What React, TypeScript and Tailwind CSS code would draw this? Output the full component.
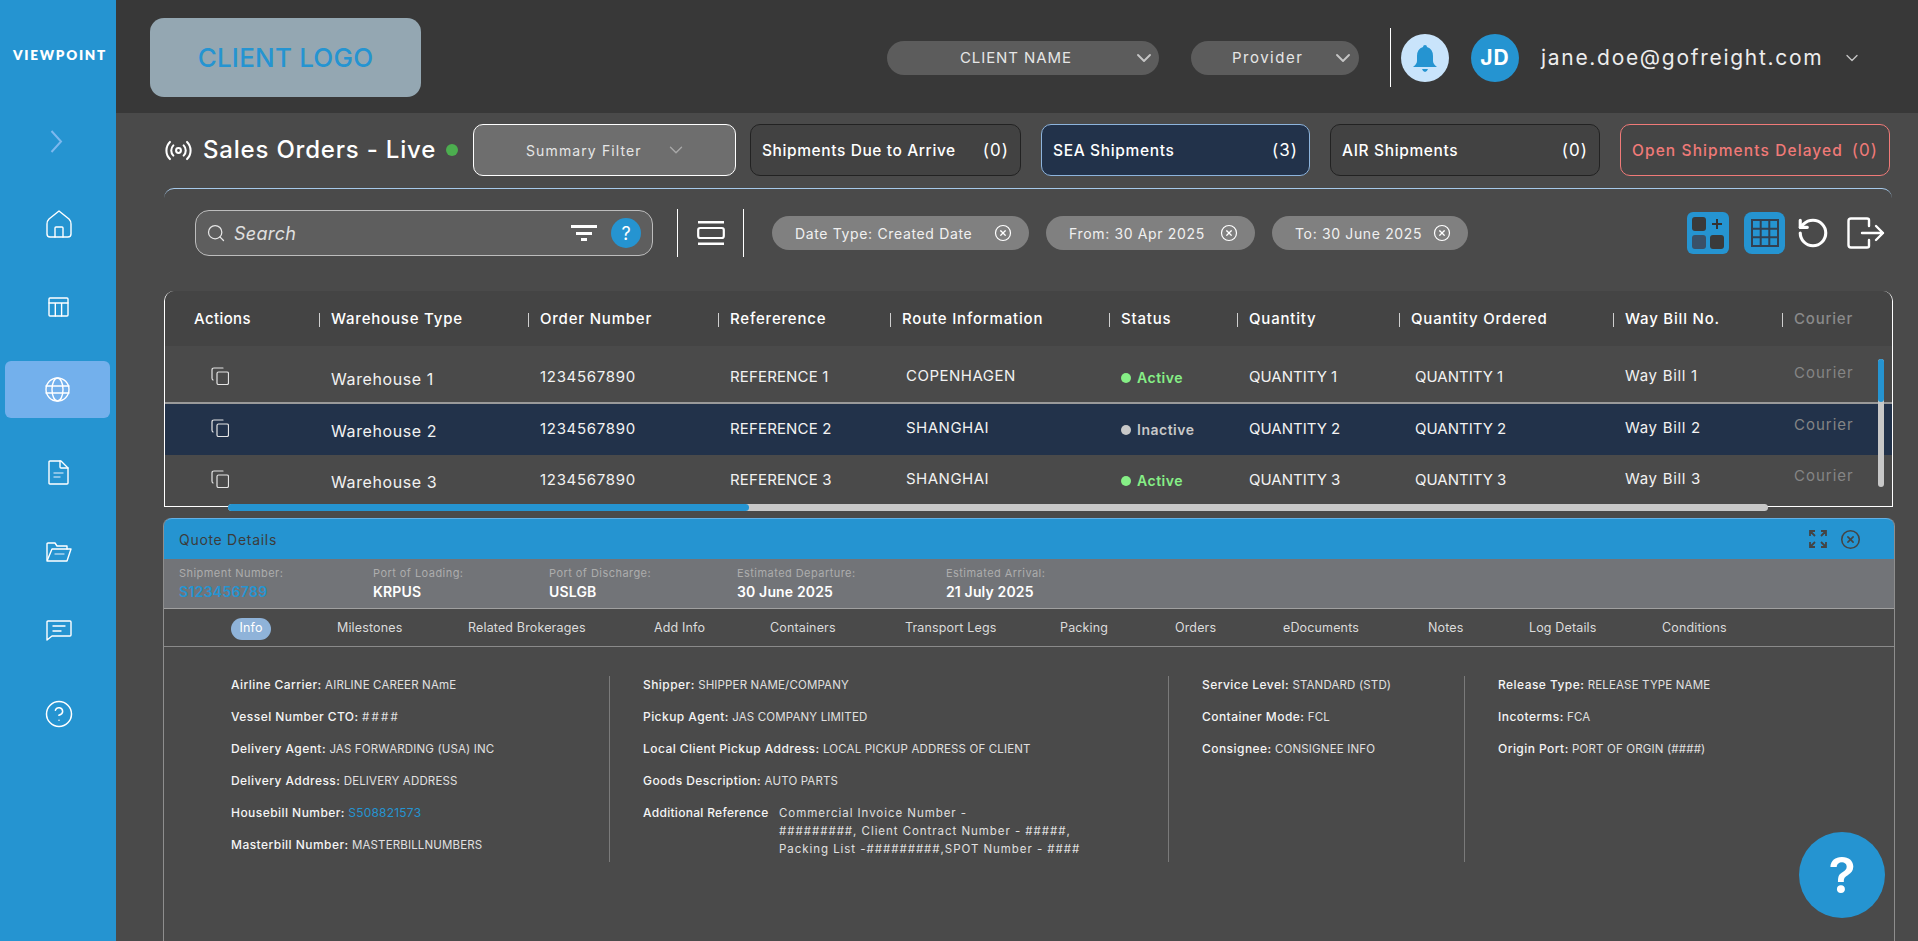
import React from "react";
import { ChevronDown, Search, RotateCcw, Radio, CircleX, HelpCircle } from "lucide-react";

const stroke = { fill: "none", stroke: "currentColor", strokeLinecap: "round" as const, strokeLinejoin: "round" as const };

function HomeIcon() {
  return (
    <svg width="26" height="28" viewBox="0 0 26 28" className="text-white" {...stroke} strokeWidth="1.4">
      <path d="M13 1 L23 9 Q25 11 25 14 V24 Q25 27 22 27 H4 Q1 27 1 24 V14 Q1 11 3 9 Z" />
      <path d="M9 27 V18 Q9 17 10 17 H16 Q17 17 17 18 V27" />
    </svg>
  );
}
function TableIcon() {
  return (
    <svg width="21" height="20" viewBox="0 0 21 20" className="text-white" {...stroke} strokeWidth="1.4">
      <rect x="1" y="1" width="19" height="18" rx="1" />
      <path d="M1 6 H20 M7.3 6 V19 M13.6 6 V19" />
    </svg>
  );
}
function GlobeIcon() {
  return (
    <svg width="25" height="25" viewBox="0 0 25 25" className="text-white" {...stroke} strokeWidth="1.4">
      <circle cx="12.5" cy="12.5" r="11.5" />
      <ellipse cx="12.5" cy="12.5" rx="5.5" ry="11.5" />
      <path d="M1 9 H24 M1 16 H24" />
    </svg>
  );
}
function DocIcon() {
  return (
    <svg width="21" height="25" viewBox="0 0 21 25" className="text-white" {...stroke} strokeWidth="1.4">
      <path d="M2 1 H13 L20 8 V23 Q20 24 19 24 H2 Q1 24 1 23 V2 Q1 1 2 1 Z" />
      <path d="M12 1 V7 Q12 8 13 8 H20" />
      <path d="M6 13 H15 M6 17 H12" stroke="#a9d2ee" />
    </svg>
  );
}
function FolderIcon() {
  return (
    <svg width="26" height="20" viewBox="0 0 26 20" className="text-white" {...stroke} strokeWidth="1.4">
      <path d="M1 18 V2 Q1 1 2 1 H9 L11 4 H21 V7" />
      <path d="M6 7 H25 L21 19 H1 Z" />
      <path d="M9 12 H18" stroke="#a9d2ee" />
    </svg>
  );
}
function ChatIcon() {
  return (
    <svg width="26" height="21" viewBox="0 0 26 21" className="text-white" {...stroke} strokeWidth="1.4">
      <path d="M2 1 H24 Q25 1 25 2 V15 Q25 16 24 16 H6 L1 20 V2 Q1 1 2 1 Z" />
      <path d="M7 6 H19 M7 11 H15" />
    </svg>
  );
}
function ChevronNav() {
  return (
    <svg width="13" height="23" viewBox="0 0 13 23" fill="none" stroke="#7cb8ee" strokeWidth="2">
      <path d="M1.500 1 L11 11.500 L1.500 22" />
    </svg>
  );
}
function BellIcon() {
  return (
    <svg width="26" height="28" viewBox="0 0 26 28" fill="#2594d1">
      <path d="M11 3 Q11 1 13 1 Q15 1 15 3 Q21 5 21 12 V17 Q21 20 25 23 H1 Q5 20 5 17 V12 Q5 5 11 3 Z" />
      <path d="M10 25 H16 Q15 28 13 28 Q11 28 10 25 Z" />
    </svg>
  );
}
function CopyIcon() {
  return (
    <svg width="18" height="18" viewBox="0 0 18 18" className="text-[#e4e4e4]" {...stroke} strokeWidth="1.2">
      <path d="M12 1 H3 Q1 1 1 3 V11 Q1 12.500 2 13" />
      <rect x="6" y="5" width="11.500" height="12.500" rx="1.500" />
    </svg>
  );
}
function FilterLines() {
  return (
    <svg width="26" height="17" viewBox="0 0 26 17">
      <rect x="0" y="0" width="26" height="3" fill="#fff" />
      <rect x="5" y="7" width="16" height="3" fill="#fff" />
      <rect x="10" y="13" width="6" height="3" fill="#fff" />
    </svg>
  );
}
function RowsIcon() {
  return (
    <svg width="28" height="24" viewBox="0 0 28 24" className="text-white">
      <rect x="1" y="0" width="26" height="2.500" fill="currentColor" />
      <rect x="1.200" y="7" width="25.600" height="10" rx="2" fill="none" stroke="currentColor" strokeWidth="2.200" />
      <rect x="1" y="21.500" width="26" height="2.500" fill="currentColor" />
    </svg>
  );
}
function CardsAddIcon() {
  return (
    <svg width="34" height="34" viewBox="0 0 34 34">
      <rect x="1" y="1" width="14" height="14" rx="3" fill="#3a3a3a" />
      <rect x="1" y="19" width="14" height="14" rx="3" fill="#3a5168" />
      <rect x="19" y="19" width="14" height="14" rx="3" fill="#3a3a3a" />
      <path d="M26 3 V13 M21 8 H31" stroke="#333" strokeWidth="2" />
    </svg>
  );
}
function GridIcon() {
  return (
    <svg width="28" height="28" viewBox="0 0 28 28" fill="none" stroke="#334050" strokeWidth="2">
      <rect x="1" y="1" width="26" height="26" />
      <path d="M9.700 1 V27 M18.300 1 V27 M1 9.700 H27 M1 18.300 H27" />
    </svg>
  );
}
function ExitIcon() {
  return (
    <svg width="38" height="32" viewBox="0 0 38 32" className="text-white" {...stroke} strokeWidth="2.400">
      <path d="M22 9 V3 Q22 1.500 20 1.500 H4 Q1.500 1.500 1.500 4 V28 Q1.500 30.500 4 30.500 H20 Q22 30.500 22 29 V23" />
      <path d="M15 16 H36 M29 9 L36 16 L29 23" />
    </svg>
  );
}
function ExpandIcon() {
  return (
    <svg width="18" height="18" viewBox="0 0 18 18" fill="none" stroke="#444" strokeWidth="1.800">
      <path d="M1 6 V1 H6 M1 1 L6 6 M12 1 H17 V6 M17 1 L12 6 M1 12 V17 H6 M1 17 L6 12 M17 12 V17 H12 M17 17 L12 12" />
    </svg>
  );
}

function Pill({ className, label, labelClass }: { className: string; label: string; labelClass: string }) {
  return (
    <div className={`flex items-center bg-[#5c5c5c] rounded-full h-[34px] text-[#e6e6e6] text-[15px] ${className}`}>
      <span className={labelClass}>{label}</span>
      <ChevronDown size={24} strokeWidth={1.900} className="text-[#c5c5c5] -ml-[3px]" />
    </div>
  );
}

function StatCard({ label, count, className, w }: { label: string; count: string; className: string; w: string }) {
  return (
    <div className={`flex items-center justify-between h-[52px] rounded-[10px] border px-[11px] pt-[1px] text-[15.500px] font-medium ${w} ${className}`}>
      <span className="whitespace-nowrap">{label}</span>
      <span className="text-[17px] font-normal tracking-[0.06em]">{count}</span>
    </div>
  );
}

function Chip({ label, w }: { label: string; w: string }) {
  return (
    <div className={`flex items-center justify-between bg-[#808080] rounded-full h-[34px] pl-[23px] pr-[17px] text-[14px] tracking-[0.65px] text-[#f0f0f0] ${w}`}>
      <span className="whitespace-nowrap">{label}</span>
      <CircleX size={18} strokeWidth={1.600} className="text-white" />
    </div>
  );
}

const columns = "grid grid-cols-[154px_209px_190px_172px_219px_128px_162px_214px_169px_110px]";

const headers = ["Actions", "Warehouse Type", "Order Number", "Refererence", "Route Information", "Status", "Quantity", "Quantity Ordered", "Way Bill No.", "Courier"];

const rows = [
  { n: 1, route: "COPENHAGEN", active: true },
  { n: 2, route: "SHANGHAI", active: false },
  { n: 3, route: "SHANGHAI", active: true },
];

function TableRow({ n, route, active }: { n: number; route: string; active: boolean }) {
  const bg = n === 2 ? "bg-[#22324a]" : n === 1 ? "border-b-2 border-[#9a9a9a]" : "";
  return (
    <div className={`${columns} h-[51px] items-center text-[15px] text-[#f2f2f2] ${bg}`}>
      <div className="pl-[46px] pb-[3px]"><CopyIcon /></div>
      <div className="pl-[12px] pt-[3px] text-[16px] tracking-[0.6px]">Warehouse {n}</div>
      <div className="pl-[12px] tracking-[0.7px]">1234567890</div>
      <div className="pl-[12px] tracking-[0.15px]">REFERENCE {n}</div>
      <div className="pl-[16px] pb-[2px] tracking-[0.5px]">{route}</div>
      <div className="pl-[12px] flex items-center gap-[6px] text-[14px] font-semibold tracking-[0.5px]">
        <span className={`w-[10px] h-[10px] rounded-full ${active ? "bg-[#86ef86]" : "bg-[#c8c8c8]"}`} />
        <span className={active ? "text-[#86ef86]" : "text-[#c8c8c8]"}>{active ? "Active" : "Inactive"}</span>
      </div>
      <div className="pl-[12px]">QUANTITY {n}</div>
      <div className="pl-[16px]">QUANTITY {n}</div>
      <div className="pl-[12px] pb-[2px] tracking-[0.7px]">Way Bill {n}</div>
      <div className="pl-[12px] pb-[9px] text-[#858585] tracking-[1px]">Courier</div>
    </div>
  );
}

function Field({ label, value, link, hash }: { label: string; value: string; link?: boolean; hash?: boolean }) {
  const valueClass = link
    ? "text-[#2594d1] tracking-[0.2px]"
    : hash
      ? "text-[#e0e0e0] text-[11.500px] tracking-[2.2px]"
      : "text-[#e0e0e0] text-[11.500px] tracking-[0.15px]";
  return (
    <div className="h-[32px] leading-[18px] whitespace-nowrap">
      <span className="font-medium text-[#f5f5f5] tracking-[0.45px]">{label}</span>{" "}
      <span className={valueClass}>{value}</span>
    </div>
  );
}

const summary = [
  { label: "Shipment Number:", value: "S123456789", w: "w-[194px]", link: true },
  { label: "Port of Loading:", value: "KRPUS", w: "w-[176px]" },
  { label: "Port of Discharge:", value: "USLGB", w: "w-[188px]" },
  { label: "Estimated Departure:", value: "30 June 2025", w: "w-[209px]" },
  { label: "Estimated Arrival:", value: "21 July 2025", w: "w-[200px]" },
];

const tabs: [string, string][] = [
  ["Milestones", "w-[131px]"],
  ["Related Brokerages", "w-[186px]"],
  ["Add Info", "w-[116px]"],
  ["Containers", "w-[135px]"],
  ["Transport Legs", "w-[155px]"],
  ["Packing", "w-[115px]"],
  ["Orders", "w-[108px]"],
  ["eDocuments", "w-[145px]"],
  ["Notes", "w-[101px]"],
  ["Log Details", "w-[133px]"],
  ["Conditions", "w-[100px]"],
];

export default function App() {
  return (
    <div className="flex w-[1918px] h-[941px] overflow-hidden bg-[#4a4a4a] text-white font-['Inter','Liberation_Sans',sans-serif]">
      <aside className="w-[116px] shrink-0 bg-[#2594d1] flex flex-col">
        <div className="h-[113px] flex items-center justify-center pb-[2px] pl-[4px] text-[13.500px] font-extrabold tracking-[0.13em] font-['Lato',sans-serif]">VIEWPOINT</div>
        <div className="h-[57px] flex items-center justify-center pr-[3px]">
          <ChevronNav />
        </div>
        <div className="flex flex-col items-center pl-[1px] mt-[13px]">
          <div className="h-[82px] flex items-center justify-center"><HomeIcon /></div>
          <div className="h-[84px] flex items-center justify-center"><TableIcon /></div>
          <div className="h-[80px] flex items-center justify-center">
            <div className="h-[57px] w-[105px] -ml-[2px] bg-[#73b0ec] rounded-[6px] flex items-center justify-center"><GlobeIcon /></div>
          </div>
          <div className="h-[86px] flex items-center justify-center"><DocIcon /></div>
          <div className="h-[74px] flex items-center justify-center"><FolderIcon /></div>
          <div className="h-[82px] flex items-center justify-center"><ChatIcon /></div>
          <div className="h-[85px] flex items-center justify-center"><HelpCircle size={30} strokeWidth={1.200} /></div>
        </div>
      </aside>

      <main className="flex-1 flex flex-col min-w-0 relative">
        <header className="h-[113px] shrink-0 bg-[#383838] flex items-center pl-[34px] pr-[56px] pt-[2px]">
          <div className="w-[271px] h-[79px] rounded-[14px] bg-[#94a7b2] flex items-center justify-center text-[#2594d1] text-[26px] font-medium tracking-[0.2px]">CLIENT LOGO</div>
          <div className="flex-1" />
          <Pill className="w-[272px] tracking-[0.06em]" label="CLIENT NAME" labelClass="ml-[73px] w-[175px] pt-[2px]" />
          <Pill className="w-[168px] ml-[32px] tracking-[0.1em]" label="Provider" labelClass="ml-[41px] w-[102px] pt-[2px]" />
          <div className="w-px h-[59px] bg-white ml-[31px]" />
          <div className="w-[48px] h-[48px] rounded-full bg-[#c9e4fb] ml-[10px] flex items-center justify-center">
            <BellIcon />
          </div>
          <div className="w-[48px] h-[48px] rounded-full bg-[#2594d1] ml-[22px] flex items-center justify-center text-[21px] font-bold tracking-[0.05em]">JD</div>
          <div className="ml-[22px] text-[21px] tracking-[1.7px] text-[#ededed] w-[293px] whitespace-nowrap">jane.doe@gofreight.com</div>
          <ChevronDown size={20} strokeWidth={1.600} className="text-[#c5c5c5] ml-[8px]" />
        </header>

        <div className="flex flex-col pl-[48px] flex-1 min-h-0">
          <div className="flex items-center h-[52px] mt-[11px]">
            <div className="w-[309px] flex items-center">
              <Radio size={29} strokeWidth={1.700} className="text-white" />
              <span className="ml-[10px] text-[24px] font-medium tracking-[0.8px] whitespace-nowrap">Sales Orders - Live</span>
              <span className="ml-[10px] w-[12px] h-[12px] rounded-full bg-[#4cae4f]" />
            </div>
            <div className="w-[263px] h-[52px] rounded-[10px] border border-white bg-[#6e6e6e] flex items-center text-[14px] tracking-[0.08em] text-[#e6e6e6]">
              <span className="ml-[52px] w-[139px]">Summary Filter</span>
              <ChevronDown size={22} strokeWidth={1.500} className="text-[#a8a8a8]" />
            </div>
            <div className="flex gap-[20px] ml-[14px]">
              <StatCard w="w-[271px] tracking-[0.6px]" label="Shipments Due to Arrive" count="(0)" className="bg-[#424242] border-[#222] text-white" />
              <StatCard w="w-[269px] tracking-[0.65px]" label="SEA Shipments" count="(3)" className="bg-[#22324a] border-[#8db4dd] text-white" />
              <StatCard w="w-[270px] tracking-[0.65px]" label="AIR Shipments" count="(0)" className="bg-[#424242] border-[#222] text-white" />
              <StatCard w="w-[270px] tracking-[1.1px]" label="Open Shipments Delayed" count="(0)" className="bg-[#454545] border-[#f07a78] text-[#f07a78]" />
            </div>
          </div>

          <section className="w-[1728px] h-[103px] mt-[12px] rounded-t-[10px] border-t border-[#a6c9ea] flex items-center pl-[31px] pb-[14px]">
            <div className="w-[458px] h-[46px] rounded-[14px] border border-[#bdbdbd] bg-[#5e5e5e] flex items-center pl-[10px] pr-[11px]">
              <Search size={20} strokeWidth={1.500} className="text-[#e6e6e6]" />
              <span className="ml-[8px] italic text-[18px] text-[#e0e0e0] flex-1 tracking-[0.3px]">Search</span>
              <FilterLines />
              <span className="ml-[14px] w-[30px] h-[30px] rounded-full bg-[#2594d1] flex items-center justify-center text-[18px] font-normal">?</span>
            </div>
            <div className="w-px h-[48px] bg-white ml-[24px]" />
            <div className="ml-[19px]"><RowsIcon /></div>
            <div className="w-px h-[48px] bg-white ml-[18px]" />
            <div className="flex gap-[17px] ml-[28px]">
              <Chip label="Date Type: Created Date" w="w-[257px]" />
              <Chip label="From: 30 Apr 2025" w="w-[209px]" />
              <Chip label="To: 30 June 2025" w="w-[196px]" />
            </div>
            <div className="flex-1" />
            <div className="w-[42px] h-[42px] rounded-[6px] bg-[#2594d1] flex items-center justify-center"><CardsAddIcon /></div>
            <div className="w-[41px] h-[42px] rounded-[8px] bg-[#2594d1] ml-[15px] flex items-center justify-center"><GridIcon /></div>
            <RotateCcw size={34} strokeWidth={2.200} className="ml-[11px]" />
            <div className="ml-[17px] mr-[7px]"><ExitIcon /></div>
          </section>

          <section className="relative w-[1729px] h-[216px] rounded-t-[10px] border-x border-white border-b">
            <div className={`${columns} h-[55px] bg-[#444444] rounded-t-[10px] items-center pt-[2px] text-[15px] font-medium tracking-[0.8px]`}>
              {headers.map((h, i) => (
                <div key={h} className={`flex items-center h-[14px] ${i === 0 ? "pl-[29px] tracking-[0.4px]" : "border-l border-[#cfcfcf] pl-[11px]"} ${i === 9 ? "text-[#8a8a8a] border-[#777]" : ""}`}>
                  {h}
                </div>
              ))}
            </div>
            <div className="pt-[7px]">
              {rows.map((r) => <TableRow key={r.n} {...r} />)}
            </div>
            <div className="absolute right-[8px] top-[68px] w-[6px] h-[128px] rounded-full bg-[#c8c8c8]">
              <div className="w-full h-[43px] rounded-full bg-[#2594d1]" />
            </div>
            <div className="absolute left-[63px] top-[213px] w-[1540px] h-[7px] rounded-full bg-[#c8c8c8]">
              <div className="w-[521px] h-full rounded-full bg-[#2594d1]" />
            </div>
          </section>

          <section className="w-[1732px] -ml-px mt-[11px] flex-1 flex flex-col rounded-t-[8px] border-x border-[#8e8e8e] relative">
            <div className="h-[41px] shrink-0 bg-[#2594d1] rounded-t-[8px] border-t border-[#62b0e6] flex items-center pl-[15px] pr-[33px] text-[14px] tracking-[0.7px] text-[#3c3c3c]">
              <span className="flex-1">Quote Details</span>
              <ExpandIcon />
              <CircleX size={21} strokeWidth={1.800} className="ml-[13px] text-[#444]" />
            </div>
            <div className="h-[50px] shrink-0 bg-[#727478] border-b border-[#a0a0a0] flex pl-[15px] pt-[7px]">
              {summary.map((s) => (
                <div key={s.label} className={s.w}>
                  <div className="text-[11px] leading-[15px] text-[#adadad] tracking-[0.45px]">{s.label}</div>
                  <div className={`mt-[2px] text-[14px] leading-[18px] font-semibold ${s.link ? "text-[#2594d1] font-normal tracking-[0.3px]" : "text-white tracking-[0.15px]"}`}>{s.value}</div>
                </div>
              ))}
            </div>
            <div className="h-[38px] shrink-0 border-b border-[#8a8a8a] flex items-center pt-[2px] pl-[67px] text-[12.500px] tracking-[0.15px] text-[#dcdcdc]">
              <span className="w-[40px] h-[22px] rounded-full bg-[#8fb3d9] flex items-center justify-center mr-[66px] text-white">Info</span>
              {tabs.map(([t, w]) => <span key={t} className={w}>{t}</span>)}
            </div>
            <div className="flex pt-[29px] text-[12px]">
              <div className="w-[379px] ml-[67px] border-r border-[#7a7a7a] h-[186px]">
                <Field label="Airline Carrier:" value="AIRLINE CAREER NAmE" />
                <Field label="Vessel Number CTO:" value="####" hash />
                <Field label="Delivery Agent:" value="JAS FORWARDING (USA) INC" />
                <Field label="Delivery Address:" value="DELIVERY ADDRESS" />
                <Field label="Housebill Number:" value="S508821573" link />
                <Field label="Masterbill Number:" value="MASTERBILLNUMBERS" />
              </div>
              <div className="w-[559px] pl-[33px] border-r border-[#7a7a7a] h-[186px]">
                <Field label="Shipper:" value="SHIPPER NAME/COMPANY" />
                <Field label="Pickup Agent:" value="JAS COMPANY LIMITED" />
                <Field label="Local Client Pickup Address:" value=" LOCAL PICKUP ADDRESS OF CLIENT" />
                <Field label="Goods Description:" value="AUTO PARTS" />
                <div className="flex leading-[18px]">
                  <span className="font-medium w-[136px] shrink-0 whitespace-nowrap text-[#f5f5f5] tracking-[0.3px]">Additional Reference</span>
                  <span className="text-[#e0e0e0] text-[11.500px] tracking-[0.95px] whitespace-nowrap">
                    Commercial Invoice Number -<br />
                    #########, Client Contract Number - #####,<br />
                    Packing List -#########,SPOT Number - ####
                  </span>
                </div>
              </div>
              <div className="w-[296px] pl-[33px] border-r border-[#7a7a7a] h-[186px]">
                <Field label="Service Level:" value="STANDARD (STD)" />
                <Field label="Container Mode:" value="FCL" />
                <Field label="Consignee:" value="CONSIGNEE INFO" />
              </div>
              <div className="pl-[33px]">
                <Field label="Release Type:" value="RELEASE TYPE NAME" />
                <Field label="Incoterms:" value="FCA" />
                <Field label="Origin Port:" value="PORT OF ORGIN (####)" />
              </div>
            </div>
          </section>
        </div>

        <div className="absolute left-[1683px] top-[832px] w-[86px] h-[86px] rounded-full bg-[#2594d1] flex items-center justify-center text-[50px] font-semibold">?</div>
      </main>
    </div>
  );
}
